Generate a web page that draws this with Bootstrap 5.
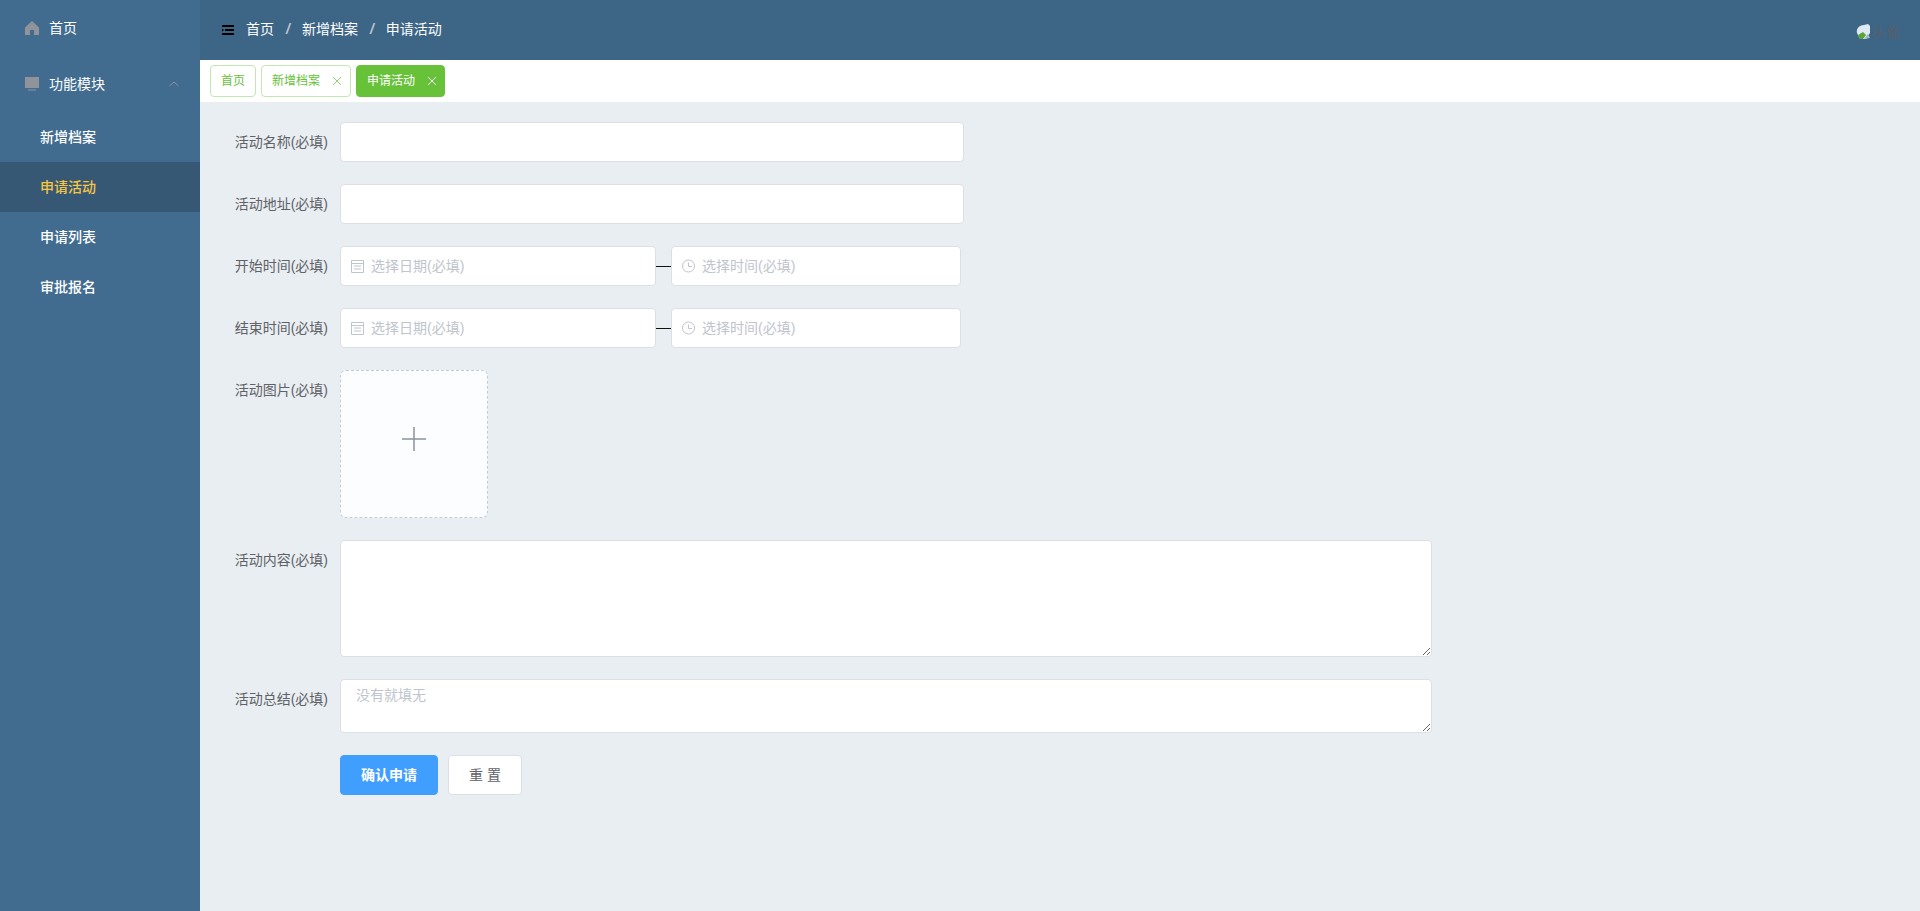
<!DOCTYPE html>
<html lang="zh"><head><meta charset="utf-8">
<link href="https://cdn.jsdelivr.net/npm/bootstrap@5.3.0/dist/css/bootstrap.min.css" rel="stylesheet">
<script src="https://cdn.jsdelivr.net/npm/bootstrap@5.3.0/dist/js/bootstrap.bundle.min.js"></script>
<style>
html,body{height:100%;}
body{font-family:"Liberation Sans","Noto Sans CJK SC",sans-serif;font-size:14px;background:#e9eef3;overflow:hidden;}
.shell{height:911px;}
.side{width:200px;background:#416c90;color:#fff;flex:none;}
.side-row{height:56px;padding-left:25px;gap:10px;}
.chev{margin-right:20px;}
.side-sub{height:50px;padding-left:40px;font-size:14px;font-weight:500;}
.side-sub.on{background:#365875;color:#f6c544;}
.side-ic{width:14px;height:14px;}
.top{height:60px;background:#3d6586;color:#fff;padding:0 20px 0 22px;}
.crumb-t{margin-bottom:2px;}
.crumb-first{margin-left:12px;}
.slash{margin:0 12px 2px;color:#c0c4cc;font-weight:700;font-style:italic;}
.avatar{color:#56606c;font-size:14px;line-height:16px;padding-top:4px;}
.tabs{height:42px;background:#fff;padding-left:10px;gap:5px;}
.tabx{height:32px;padding:0 8px 0 10px;border:1px solid #c2e7b0;border-radius:4px;color:#67c23a;background:#fff;font-size:12px;gap:12px;}
.tabx.solo{padding-right:10px;}
.tabx.on{background:#67c23a;border-color:#67c23a;color:#fff;padding-right:7px;}
.formbox{padding-top:20px;}
.frow{margin-bottom:22px;}
.lab{width:140px;padding-right:12px;text-align:right;color:#606266;height:40px;line-height:40px;flex:none;}
.inp{height:40px;background:#fff;border:1px solid #dcdfe6;border-radius:4px;display:block;outline:0;}
.wide{width:624px;}
.dt{height:40px;background:#fff;border:1px solid #dcdfe6;border-radius:4px;color:#c0c4cc;gap:7px;padding-left:10px;}
.dtdate{width:316px;}
.dttime{width:290px;}
.dash{width:15px;height:1px;background:#111;}
.upl{width:148px;height:148px;background:#fbfdff;border:1px dashed #c0ccda;border-radius:6px;padding-bottom:11px;}
.tarea{width:1092px;display:block;background:#fff;border:1px solid #dcdfe6;border-radius:4px;color:#c0c4cc;padding:5px 15px;line-height:21px;outline:0;resize:vertical;font:inherit;}
.ta1{height:117px;}
.ta2{height:54px;}
.btnrow{margin-left:140px;gap:10px;}
.go{width:98px;height:40px;background:#409eff;color:#fff;border:1px solid #409eff;font-size:14px;font-weight:700;border-radius:4px;}
.rs{width:74px;height:40px;background:#fff;color:#606266;border:1px solid #dcdfe6;border-radius:4px;font-size:14px;}
</style></head><body>
<div class="d-flex shell">
<aside class="side">
<div class="d-flex align-items-center side-row"><svg class="side-ic" viewBox="0 0 14 14"><path d="M7 0 0 6.500V14H5V9H9V14H14V6.500Z" fill="#909399"/></svg>首页</div>
<div class="d-flex align-items-center side-row"><svg class="side-ic" viewBox="0 0 14 14"><path d="M0 0H14V11H0ZM3 12.500H11V13.500H3Z" fill="#909399"/></svg>功能模块<svg class="ms-auto chev" width="12" height="12" viewBox="0 0 12 12"><path d="M1.500 8 6 4 10.500 8" fill="none" stroke="#909399"/></svg></div>
<div class="d-flex align-items-center side-sub">新增档案</div>
<div class="d-flex align-items-center side-sub on">申请活动</div>
<div class="d-flex align-items-center side-sub">申请列表</div>
<div class="d-flex align-items-center side-sub">审批报名</div>
</aside>
<main class="flex-grow-1">
<div class="d-flex align-items-center top"><svg width="12" height="10" viewBox="0 0 12 10"><path d="M0 1H12M3 5H12M0 9H12" stroke="#000" stroke-width="2"/><path d="M0 3.500 2 5 0 6.500Z" fill="#000"/></svg><span class="crumb-first crumb-t">首页</span><span class="slash">/</span><span class="crumb-t">新增档案</span><span class="slash">/</span><span class="crumb-t">申请活动</span>
<div class="ms-auto d-flex align-items-center avatar"><svg width="16" height="16" viewBox="0 0 16 16"><path d="M1 9C0 5 3 1 8 1L12 0 14 2V9L10 15H4Z" fill="#dfe9f3"/><path d="M2 11 7 8 10 11 7 15H4Z" fill="#55a630"/><path d="M10 12 12 10 14 14 8 15Z" fill="#a9b8c6"/></svg><span>头像</span></div></div>
<div class="d-flex align-items-center tabs"><div class="d-flex align-items-center tabx solo">首页</div><div class="d-flex align-items-center tabx">新增档案<svg width="10" height="10" viewBox="0 0 10 10"><path d="M1 1 9 9M9 1 1 9" stroke="currentColor" fill="none" opacity=".7"/></svg></div><div class="d-flex align-items-center tabx on">申请活动<svg width="10" height="10" viewBox="0 0 10 10"><path d="M1 1 9 9M9 1 1 9" stroke="currentColor" fill="none"/></svg></div></div>
<div class="formbox">
<div class="d-flex frow"><div class="lab">活动名称(必填)</div><input class="inp wide"></div>
<div class="d-flex frow"><div class="lab">活动地址(必填)</div><input class="inp wide"></div>
<div class="d-flex frow align-items-center"><div class="lab">开始时间(必填)</div><div class="d-flex align-items-center dt dtdate"><svg width="13" height="14" viewBox="0 0 13 14"><path d="M.5 1.500H12.500V13.500H.5ZM.5 4.500H12.500M3 7H10M3 10H10" fill="none" stroke="#c0c4cc"/></svg>选择日期(必填)</div><div class="dash"></div><div class="d-flex align-items-center dt dttime"><svg width="13" height="14" viewBox="0 0 13 14"><circle cx="6.500" cy="7" r="6" fill="none" stroke="#c0c4cc"/><path d="M6.500 3.500V7.500H10" fill="none" stroke="#c0c4cc"/></svg>选择时间(必填)</div></div>
<div class="d-flex frow align-items-center"><div class="lab">结束时间(必填)</div><div class="d-flex align-items-center dt dtdate"><svg width="13" height="14" viewBox="0 0 13 14"><path d="M.5 1.500H12.500V13.500H.5ZM.5 4.500H12.500M3 7H10M3 10H10" fill="none" stroke="#c0c4cc"/></svg>选择日期(必填)</div><div class="dash"></div><div class="d-flex align-items-center dt dttime"><svg width="13" height="14" viewBox="0 0 13 14"><circle cx="6.500" cy="7" r="6" fill="none" stroke="#c0c4cc"/><path d="M6.500 3.500V7.500H10" fill="none" stroke="#c0c4cc"/></svg>选择时间(必填)</div></div>
<div class="d-flex frow"><div class="lab">活动图片(必填)</div><div class="d-flex align-items-center justify-content-center upl"><svg width="24" height="24" viewBox="0 0 24 24"><path d="M12 0V24M0 12H24" stroke="#8c939d" stroke-width="1.500"/></svg></div></div>
<div class="d-flex frow"><div class="lab">活动内容(必填)</div><textarea class="tarea ta1"></textarea></div>
<div class="d-flex frow"><div class="lab">活动总结(必填)</div><textarea class="tarea ta2">没有就填无</textarea></div>
<div class="d-flex btnrow"><button class="go">确认申请</button><button class="rs">重 置</button></div>
</div>
</main>
</div>
</body></html>
